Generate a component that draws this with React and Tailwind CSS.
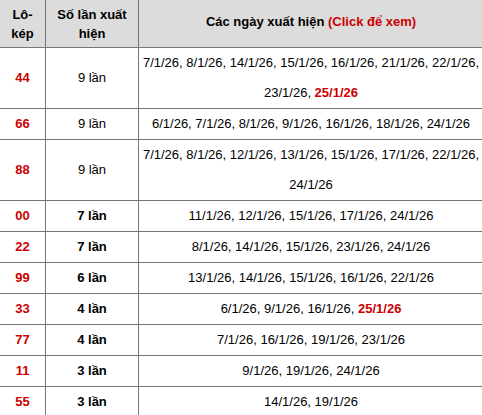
import React from 'react'

const rows = [
  { lo: '44', count: '9 lần', light: true, dates: ['7/1/26', '8/1/26', '14/1/26', '15/1/26', '16/1/26', '21/1/26', '22/1/26', '23/1/26'], hot: '25/1/26' },
  { lo: '66', count: '9 lần', light: true, dates: ['6/1/26', '7/1/26', '8/1/26', '9/1/26', '16/1/26', '18/1/26', '24/1/26'] },
  { lo: '88', count: '9 lần', light: true, dates: ['7/1/26', '8/1/26', '12/1/26', '13/1/26', '15/1/26', '17/1/26', '22/1/26', '24/1/26'] },
  { lo: '00', count: '7 lần', dates: ['11/1/26', '12/1/26', '15/1/26', '17/1/26', '24/1/26'] },
  { lo: '22', count: '7 lần', dates: ['8/1/26', '14/1/26', '15/1/26', '23/1/26', '24/1/26'] },
  { lo: '99', count: '6 lần', dates: ['13/1/26', '14/1/26', '15/1/26', '16/1/26', '22/1/26'] },
  { lo: '33', count: '4 lần', dates: ['6/1/26', '9/1/26', '16/1/26'], hot: '25/1/26' },
  { lo: '77', count: '4 lần', dates: ['7/1/26', '16/1/26', '19/1/26', '23/1/26'] },
  { lo: '11', count: '3 lần', dates: ['9/1/26', '19/1/26', '24/1/26'] },
  { lo: '55', count: '3 lần', dates: ['14/1/26', '19/1/26'] },
]

export default function App() {
  return (
    <div className="w-[482px] h-[415px] overflow-hidden bg-white font-['Liberation_Sans',Arial,sans-serif] text-[13px] text-black">
      <table className="-mt-px -ml-px w-[485px] table-fixed border-collapse">
        <colgroup>
          <col className="w-[46px]" />
          <col className="w-[93px]" />
          <col />
        </colgroup>
        <thead>
          <tr className="bg-[#dcdcdc] h-[48px]">
            <th className="border border-[#777] leading-[19px] font-bold px-1">Lô-kép</th>
            <th className="border border-[#777] leading-[19px] font-bold px-1">Số lần xuất hiện</th>
            <th className="border border-[#777] leading-[19px] font-bold px-0 pb-[5px]">
              Các ngày xuất hiện <span className="text-[#c00]">(Click để xem)</span>
            </th>
          </tr>
        </thead>
        <tbody>
          {rows.map((r) => (
            <tr key={r.lo}>
              <td className="border border-[#777] p-0 leading-[30px] text-center font-bold text-[#c00]">{r.lo}</td>
              <td className={`border border-[#777] p-0 leading-[30px] text-center ${r.light ? 'font-normal' : 'font-bold'}`}>{r.count}</td>
              <td className="border border-[#777] p-0 leading-[30px] text-center">
                {r.dates.join(', ')}
                {r.hot && (
                  <>
                    , <span className="font-bold text-[#c00]">{r.hot}</span>
                  </>
                )}
              </td>
            </tr>
          ))}
        </tbody>
      </table>
    </div>
  )
}
